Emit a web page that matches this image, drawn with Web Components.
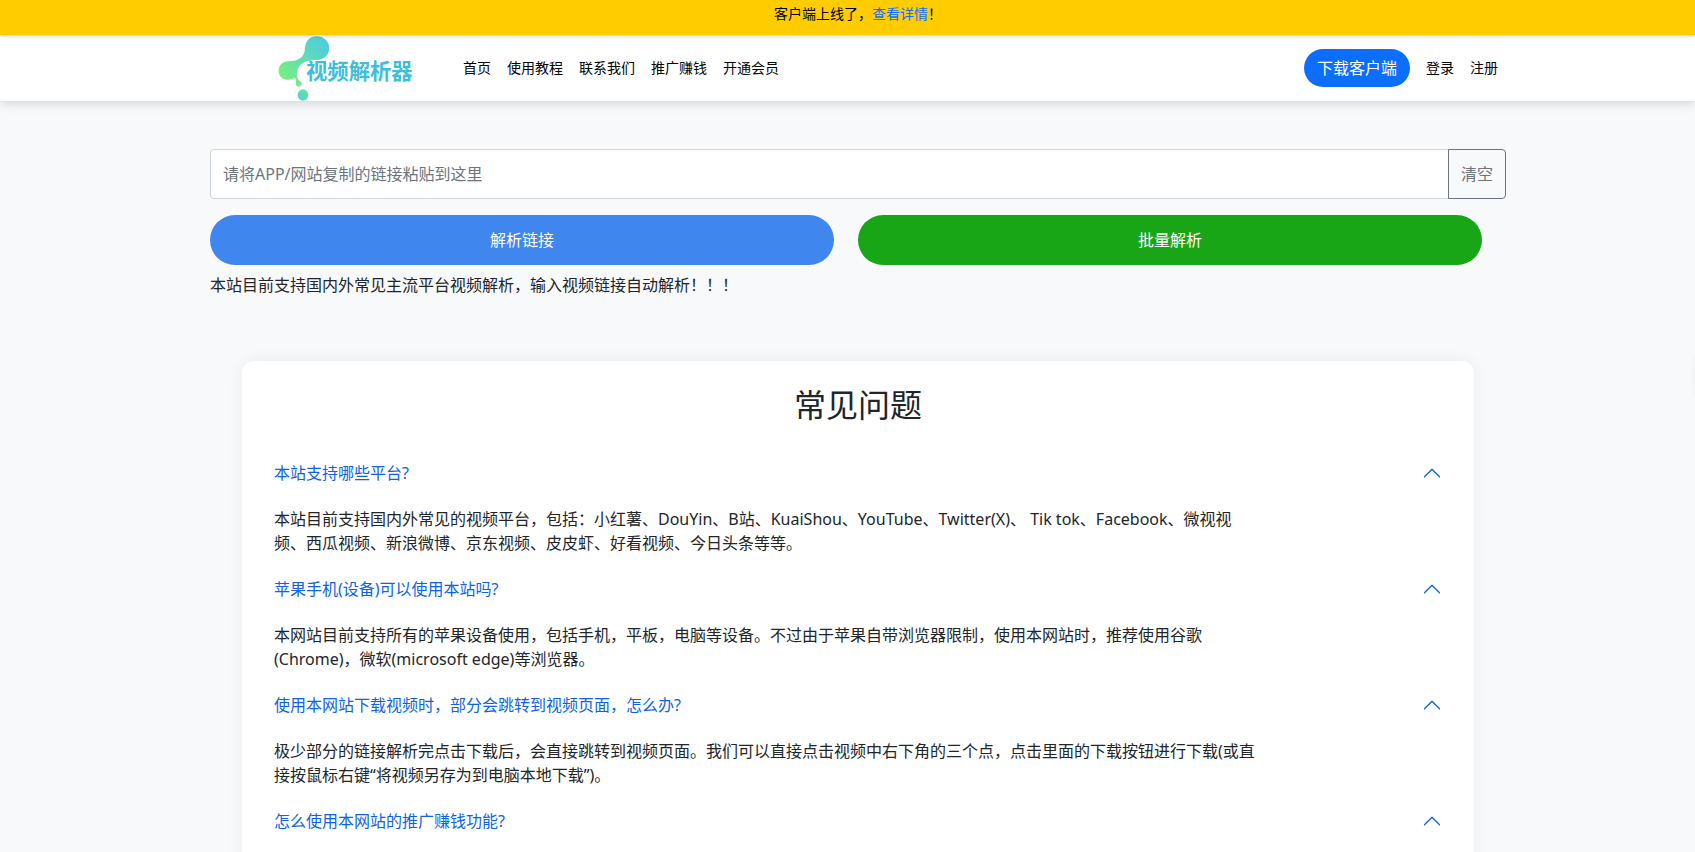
<!DOCTYPE html>
<html lang="zh-CN">
<head>
<meta charset="utf-8">
<meta name="viewport" content="width=device-width, initial-scale=1">
<title>视频解析器</title>
<style>
  body {
    --page-indent: 21px;
    margin: 0;
    overflow-x: hidden;
    background: #f8f9fb;
    color: #212529;
    font: 16px/24px "Noto Sans", "Noto Sans CJK SC", sans-serif;
  }
</style>
</head>
<body>
<top-notice>客户端上线了，<a slot="link" href="#client">查看详情</a></top-notice>
<site-header>
  <nav-link href="#home">首页</nav-link>
  <nav-link href="#guide">使用教程</nav-link>
  <nav-link href="#contact">联系我们</nav-link>
  <nav-link href="#earn">推广赚钱</nav-link>
  <nav-link href="#vip">开通会员</nav-link>
  <nav-link slot="account" href="#login">登录</nav-link>
  <nav-link slot="account" href="#register">注册</nav-link>
</site-header>
<page-main>
  <parse-form>本站目前支持国内外常见主流平台视频解析，输入视频链接自动解析！！！</parse-form>
  <faq-card>
    <span slot="title">常见问题</span>
    <faq-item question="本站支持哪些平台?">本站目前支持国内外常见的视频平台，包括：小红薯、DouYin、B站、KuaiShou、YouTube、Twitter(X)、 Tik tok、Facebook、微视视频、西瓜视频、新浪微博、京东视频、皮皮虾、好看视频、今日头条等等。</faq-item>
    <faq-item question="苹果手机(设备)可以使用本站吗?">本网站目前支持所有的苹果设备使用，包括手机，平板，电脑等设备。不过由于苹果自带浏览器限制，使用本网站时，推荐使用谷歌(Chrome)，微软(microsoft edge)等浏览器。</faq-item>
    <faq-item question="使用本网站下载视频时，部分会跳转到视频页面，怎么办?">极少部分的链接解析完点击下载后，会直接跳转到视频页面。我们可以直接点击视频中右下角的三个点，点击里面的下载按钮进行下载(或直接按鼠标右键“将视频另存为到电脑本地下载”)。</faq-item>
    <faq-item question="怎么使用本网站的推广赚钱功能?"></faq-item>
  </faq-card>
</page-main>
<side-tab></side-tab>

<script>
(function () {
  function define(name, html, setup) {
    const template = document.createElement("template");
    template.innerHTML = html;
    customElements.define(name, class extends HTMLElement {
      constructor() {
        super();
        this.attachShadow({ mode: "open" });
        this.shadowRoot.appendChild(template.content.cloneNode(true));
      }
      connectedCallback() {
        if (setup) setup(this, this.shadowRoot);
      }
    });
  }

  define("top-notice", `
    <style>
      :host {
        display: block;
        position: relative;
        z-index: 1;
        padding: 3px 0 11px var(--page-indent);
        background: #ffcc00;
        box-shadow: 0 1px 4px rgba(0, 0, 0, 0.2);
        color: #000;
        font-size: 14px;
        line-height: 21px;
        text-align: center;
      }
      ::slotted(a) { color: #0d6efd; text-decoration: none; }
    </style>
    <slot></slot><slot name="link"></slot>！
  `);

  define("nav-link", `
    <style>
      :host { display: block; }
      a {
        display: block;
        padding: 8px;
        color: #000;
        font-size: 14px;
        line-height: 20px;
        text-decoration: none;
      }
      a:hover { color: #0d6efd; }
    </style>
    <a><slot></slot></a>
  `, (host, root) => {
    root.querySelector("a").href = host.getAttribute("href");
  });

  define("site-logo", `
    <style>
      :host { display: block; }
      svg { display: block; width: 150px; height: 66px; }
      text { font-family: "Noto Sans CJK SC", sans-serif; }
    </style>
    <svg viewBox="0 9 450 198" role="img" aria-label="视频解析器">
      <defs>
        <linearGradient id="drop" gradientUnits="userSpaceOnUse" x1="30" y1="130" x2="170" y2="25">
          <stop offset="0" stop-color="#74f080"/>
          <stop offset="1" stop-color="#4fcbe2"/>
        </linearGradient>
        <linearGradient id="dot" x1="1" y1="0" x2="0" y2="1">
          <stop offset="0" stop-color="#6ce892"/>
          <stop offset="1" stop-color="#50cce0"/>
        </linearGradient>
      </defs>
      <path fill="url(#drop)" d="M141 13A36 35 0 0 1 141 84C112 82 86 92 81 120C79 133 82 142 89 147A8.500 8.500 0 1 1 78 152C80 142 76 136 68 140C54 148 26 142 26 116C26 98 40 89 54 88C80 88 98 80 104 58C104 30 116 13 141 13Z"/>
      <ellipse cx="99" cy="189" rx="16" ry="17" fill="url(#dot)"/>
      <text x="108" y="141" font-size="64" font-weight="700" fill="#3bc0dc">视频解析器</text>
    </svg>
  `);

  define("site-header", `
    <style>
      :host {
        display: block;
        padding-left: var(--page-indent);
        background: #fff;
        box-shadow: 0 3px 10px rgba(0, 0, 0, 0.14);
      }
      .bar {
        display: flex;
        align-items: center;
        box-sizing: border-box;
        max-width: 1296px;
        margin: 0 auto;
        padding-left: 60px;
      }
      nav { display: flex; flex: 1; margin-left: 35px; }
      .account { display: flex; align-items: center; }
      button {
        margin-right: 8px;
        padding: 7px 13px;
        border: 0;
        border-radius: 20px;
        background: #0d6efd;
        color: #fff;
        font: inherit;
      }
    </style>
    <div class="bar">
      <site-logo></site-logo>
      <nav><slot></slot></nav>
      <div class="account">
        <button type="button">下载客户端</button>
        <slot name="account"></slot>
      </div>
    </div>
  `);

  define("page-main", `
    <style>
      :host { display: block; padding: 48px 0 32px var(--page-indent); }
      main { max-width: 1296px; margin: 0 auto; }
    </style>
    <main><slot></slot></main>
  `);

  define("parse-form", `
    <style>
      :host { display: block; }
      .group, .actions { display: flex; }
      input, button {
        box-sizing: border-box;
        height: 50px;
        padding: 0 12px;
        font: inherit;
      }
      input {
        flex: 1;
        min-width: 0;
        border: 1px solid #ced4da;
        border-radius: 4px 0 0 4px;
        background: #fff;
        color: #212529;
      }
      input::placeholder { color: #6c757d; opacity: 1; }
      .clear {
        margin-left: -1px;
        border: 1px solid #6c757d;
        border-radius: 0 4px 4px 0;
        background: transparent;
        color: #6c757d;
      }
      .actions { gap: 24px; margin: 16px 24px 8px 0; }
      .actions button {
        flex: 1;
        border: 0;
        border-radius: 25px;
        background: #3f86ee;
        color: #fff;
      }
      .actions .batch { background: #19a616; }
      p { margin: 0; }
    </style>
    <form>
      <div class="group">
        <input type="text" aria-label="视频链接" placeholder="请将APP/网站复制的链接粘贴到这里">
        <button class="clear" type="reset">清空</button>
      </div>
      <div class="actions">
        <button type="button">解析链接</button>
        <button class="batch" type="button">批量解析</button>
      </div>
    </form>
    <p><slot></slot></p>
  `);

  define("faq-card", `
    <style>
      :host {
        display: block;
        margin: 64px 32px 0;
        padding: 24px 32px 32px;
        border-radius: 12px;
        background: #fff;
        box-shadow: 0 0 16px rgba(0, 0, 0, 0.06);
      }
      h2 {
        margin: 0 0 14px;
        font-size: 32px;
        font-weight: 400;
        line-height: 40px;
        text-align: center;
      }
    </style>
    <h2><slot name="title"></slot></h2>
    <slot></slot>
  `);

  define("faq-item", `
    <style>
      :host { display: block; }
      button {
        display: flex;
        align-items: center;
        justify-content: space-between;
        width: 100%;
        padding: 22px 0;
        border: 0;
        background: none;
        color: #0c63e4;
        font: inherit;
        text-align: left;
      }
      svg { width: 20px; height: 20px; }
      .answer { max-width: 984px; }
      button[aria-expanded="false"] svg { transform: rotate(180deg); }
      button[aria-expanded="false"] + .answer { display: none; }
    </style>
    <button type="button" aria-expanded="true">
      <span></span>
      <svg viewBox="0 0 16 16" fill="#0c63e4" aria-hidden="true">
        <path d="M14.354 11.354a.5.5 0 0 1-.708 0L8 5.707l-5.646 5.647a.5.5 0 0 1-.708-.708l6-6a.5.5 0 0 1 .708 0l6 6a.5.5 0 0 1 0 .708z"/>
      </svg>
    </button>
    <div class="answer"><slot></slot></div>
  `, (host, root) => {
    const button = root.querySelector("button");
    root.querySelector("span").textContent = host.getAttribute("question");
    button.onclick = () => {
      button.setAttribute("aria-expanded", button.getAttribute("aria-expanded") !== "true");
    };
  });

  // parked just outside the right edge, only its shadow shows
  define("side-tab", `
    <style>
      :host {
        position: fixed;
        top: 356px;
        right: -48px;
        width: 44px;
        height: 40px;
        border-radius: 4px;
        box-shadow: 0 0 10px rgba(0, 0, 0, 0.15);
      }
    </style>
  `);
})();
</script>
</body>
</html>
